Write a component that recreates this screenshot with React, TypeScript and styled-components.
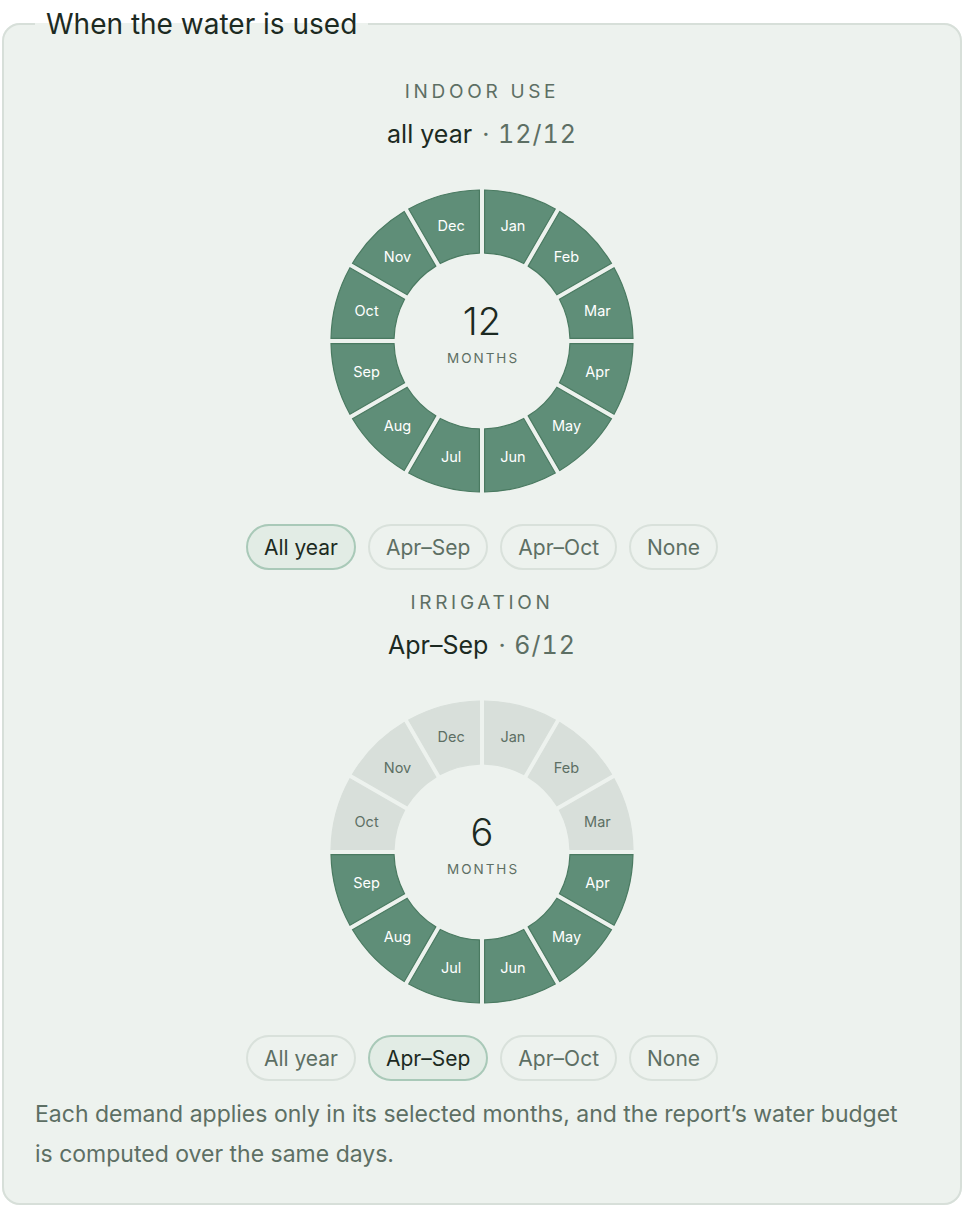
import { useState } from 'react'
import styled, { createGlobalStyle } from 'styled-components'

const GlobalStyle = createGlobalStyle`
  body {
    margin: 0;
    background: #ffffff;
    font-family: Inter, "Liberation Sans", Arial, sans-serif;
    color: #1c2a22;
  }
`

const MONTHS = ['Jan', 'Feb', 'Mar', 'Apr', 'May', 'Jun', 'Jul', 'Aug', 'Sep', 'Oct', 'Nov', 'Dec']

type PresetKey = 'all' | 'aprSep' | 'aprOct' | 'none'

const PRESETS: { key: PresetKey; button: string; summary: string; months: number[] }[] = [
  { key: 'all', button: 'All year', summary: 'all year', months: [0, 1, 2, 3, 4, 5, 6, 7, 8, 9, 10, 11] },
  { key: 'aprSep', button: 'Apr–Sep', summary: 'Apr–Sep', months: [3, 4, 5, 6, 7, 8] },
  { key: 'aprOct', button: 'Apr–Oct', summary: 'Apr–Oct', months: [3, 4, 5, 6, 7, 8, 9] },
  { key: 'none', button: 'None', summary: 'none', months: [] },
]

const Panel = styled.fieldset`
  margin: 6px 2px 0;
  padding: 38px 31px 29px;
  border: 2px solid #d7dfd9;
  border-radius: 18px;
  background: #edf2ee;
  min-width: 0;
`

const Legend = styled.legend`
  padding: 0 11px;
  font-size: 28px;
  line-height: 36px;
  color: #1c2a22;
`

const Sections = styled.div`
  display: flex;
  flex-direction: column;
  gap: 21px;
`

const Section = styled.section`
  display: flex;
  flex-direction: column;
  align-items: center;
`

const Title = styled.h3`
  margin: 0;
  font-size: 19px;
  line-height: 24px;
  font-weight: 400;
  letter-spacing: 3.7px;
  color: #5d6f64;
`

const Summary = styled.div`
  margin-top: 15px;
  font-size: 25px;
  line-height: 30px;
  color: #1c2a22;
`

const Count = styled.span`
  margin-left: 3px;
  color: #5d6f64;
  font-variant-numeric: tabular-nums;
  letter-spacing: 1px;
`

const Wheel = styled.svg`
  margin-top: 37px;
  display: block;
`

const Segment = styled.path<{ $on: boolean }>`
  fill: ${(p) => (p.$on ? '#5f8e78' : '#d8dfda')};
  stroke: ${(p) => (p.$on ? '#4a7a61' : '#d8dfda')};
  stroke-width: 1.2;
`

const MonthLabel = styled.text<{ $on: boolean }>`
  font-family: Inter, "Liberation Sans", Arial, sans-serif;
  font-size: 14.5px;
  fill: ${(p) => (p.$on ? '#ffffff' : '#5d6f64')};
`

const CenterCount = styled.text`
  font-family: Inter, "Liberation Sans", Arial, sans-serif;
  font-size: 38px;
  font-weight: 300;
  fill: #1c2a22;
`

const CenterUnit = styled.text`
  font-family: Inter, "Liberation Sans", Arial, sans-serif;
  font-size: 13.5px;
  letter-spacing: 2px;
  fill: #5d6f64;
`

const Choices = styled.div`
  margin-top: 28px;
  display: flex;
  gap: 12px;
`

const Choice = styled.button<{ $active: boolean }>`
  height: 46px;
  padding: 0 16px;
  border-radius: 23px;
  border: 2px solid ${(p) => (p.$active ? '#a9c9b8' : '#d9e1db')};
  background: ${(p) => (p.$active ? '#e2ece5' : 'transparent')};
  color: ${(p) => (p.$active ? '#1c2a22' : '#5d6f64')};
  font-family: inherit;
  font-size: 21px;
  cursor: pointer;
`

const Note = styled.p`
  margin: 13px 0 0;
  padding-right: 20px;
  font-size: 23px;
  line-height: 40px;
  color: #5d6f64;
`

const R_OUT = 151
const R_IN = 88
const HALF_GAP = 2.6

const point = (r: number, deg: number) => {
  const a = (deg * Math.PI) / 180
  return `${(r * Math.sin(a)).toFixed(2)} ${(-r * Math.cos(a)).toFixed(2)}`
}

// one ring slice, with straight gaps of constant width between neighbours
const segmentPath = (i: number) => {
  const a0 = i * 30
  const a1 = a0 + 30
  const dOut = (Math.asin(HALF_GAP / R_OUT) * 180) / Math.PI
  const dIn = (Math.asin(HALF_GAP / R_IN) * 180) / Math.PI
  return [
    `M ${point(R_OUT, a0 + dOut)}`,
    `A ${R_OUT} ${R_OUT} 0 0 1 ${point(R_OUT, a1 - dOut)}`,
    `L ${point(R_IN, a1 - dIn)}`,
    `A ${R_IN} ${R_IN} 0 0 0 ${point(R_IN, a0 + dIn)}`,
    'Z',
  ].join(' ')
}

const MonthWheel = ({ months }: { months: number[] }) => {
  const mid = (R_OUT + R_IN) / 2
  return (
    <Wheel width={310} height={310} viewBox="-155 -155 310 310">
      {MONTHS.map((m, i) => {
        const on = months.includes(i)
        const a = ((i * 30 + 15) * Math.PI) / 180
        return (
          <g key={m}>
            <Segment $on={on} d={segmentPath(i)} />
            <MonthLabel
              $on={on}
              x={mid * Math.sin(a)}
              y={-mid * Math.cos(a)}
              textAnchor="middle"
              dominantBaseline="central"
            >
              {m}
            </MonthLabel>
          </g>
        )
      })}
      <CenterCount x={0} y={-20} textAnchor="middle" dominantBaseline="central">
        {months.length}
      </CenterCount>
      <CenterUnit x={1} y={17} textAnchor="middle" dominantBaseline="central">
        MONTHS
      </CenterUnit>
    </Wheel>
  )
}

const Demand = ({ title, initial }: { title: string; initial: PresetKey }) => {
  const [selected, setSelected] = useState<PresetKey>(initial)
  const preset = PRESETS.find((p) => p.key === selected)!

  return (
    <Section>
      <Title>{title}</Title>
      <Summary>
        {preset.summary} <Count>· {preset.months.length}/12</Count>
      </Summary>
      <MonthWheel months={preset.months} />
      <Choices>
        {PRESETS.map((p) => (
          <Choice
            key={p.key}
            type="button"
            $active={p.key === selected}
            onClick={() => setSelected(p.key)}
          >
            {p.button}
          </Choice>
        ))}
      </Choices>
    </Section>
  )
}

const App: React.FC = () => {
  return (
    <>
      <GlobalStyle />
      <Panel>
        <Legend>When the water is used</Legend>
        <Sections>
          <Demand title="INDOOR USE" initial="all" />
          <Demand title="IRRIGATION" initial="aprSep" />
        </Sections>
        <Note>
          Each demand applies only in its selected months, and the report’s water budget is
          computed over the same days.
        </Note>
      </Panel>
    </>
  )
}

export default App
